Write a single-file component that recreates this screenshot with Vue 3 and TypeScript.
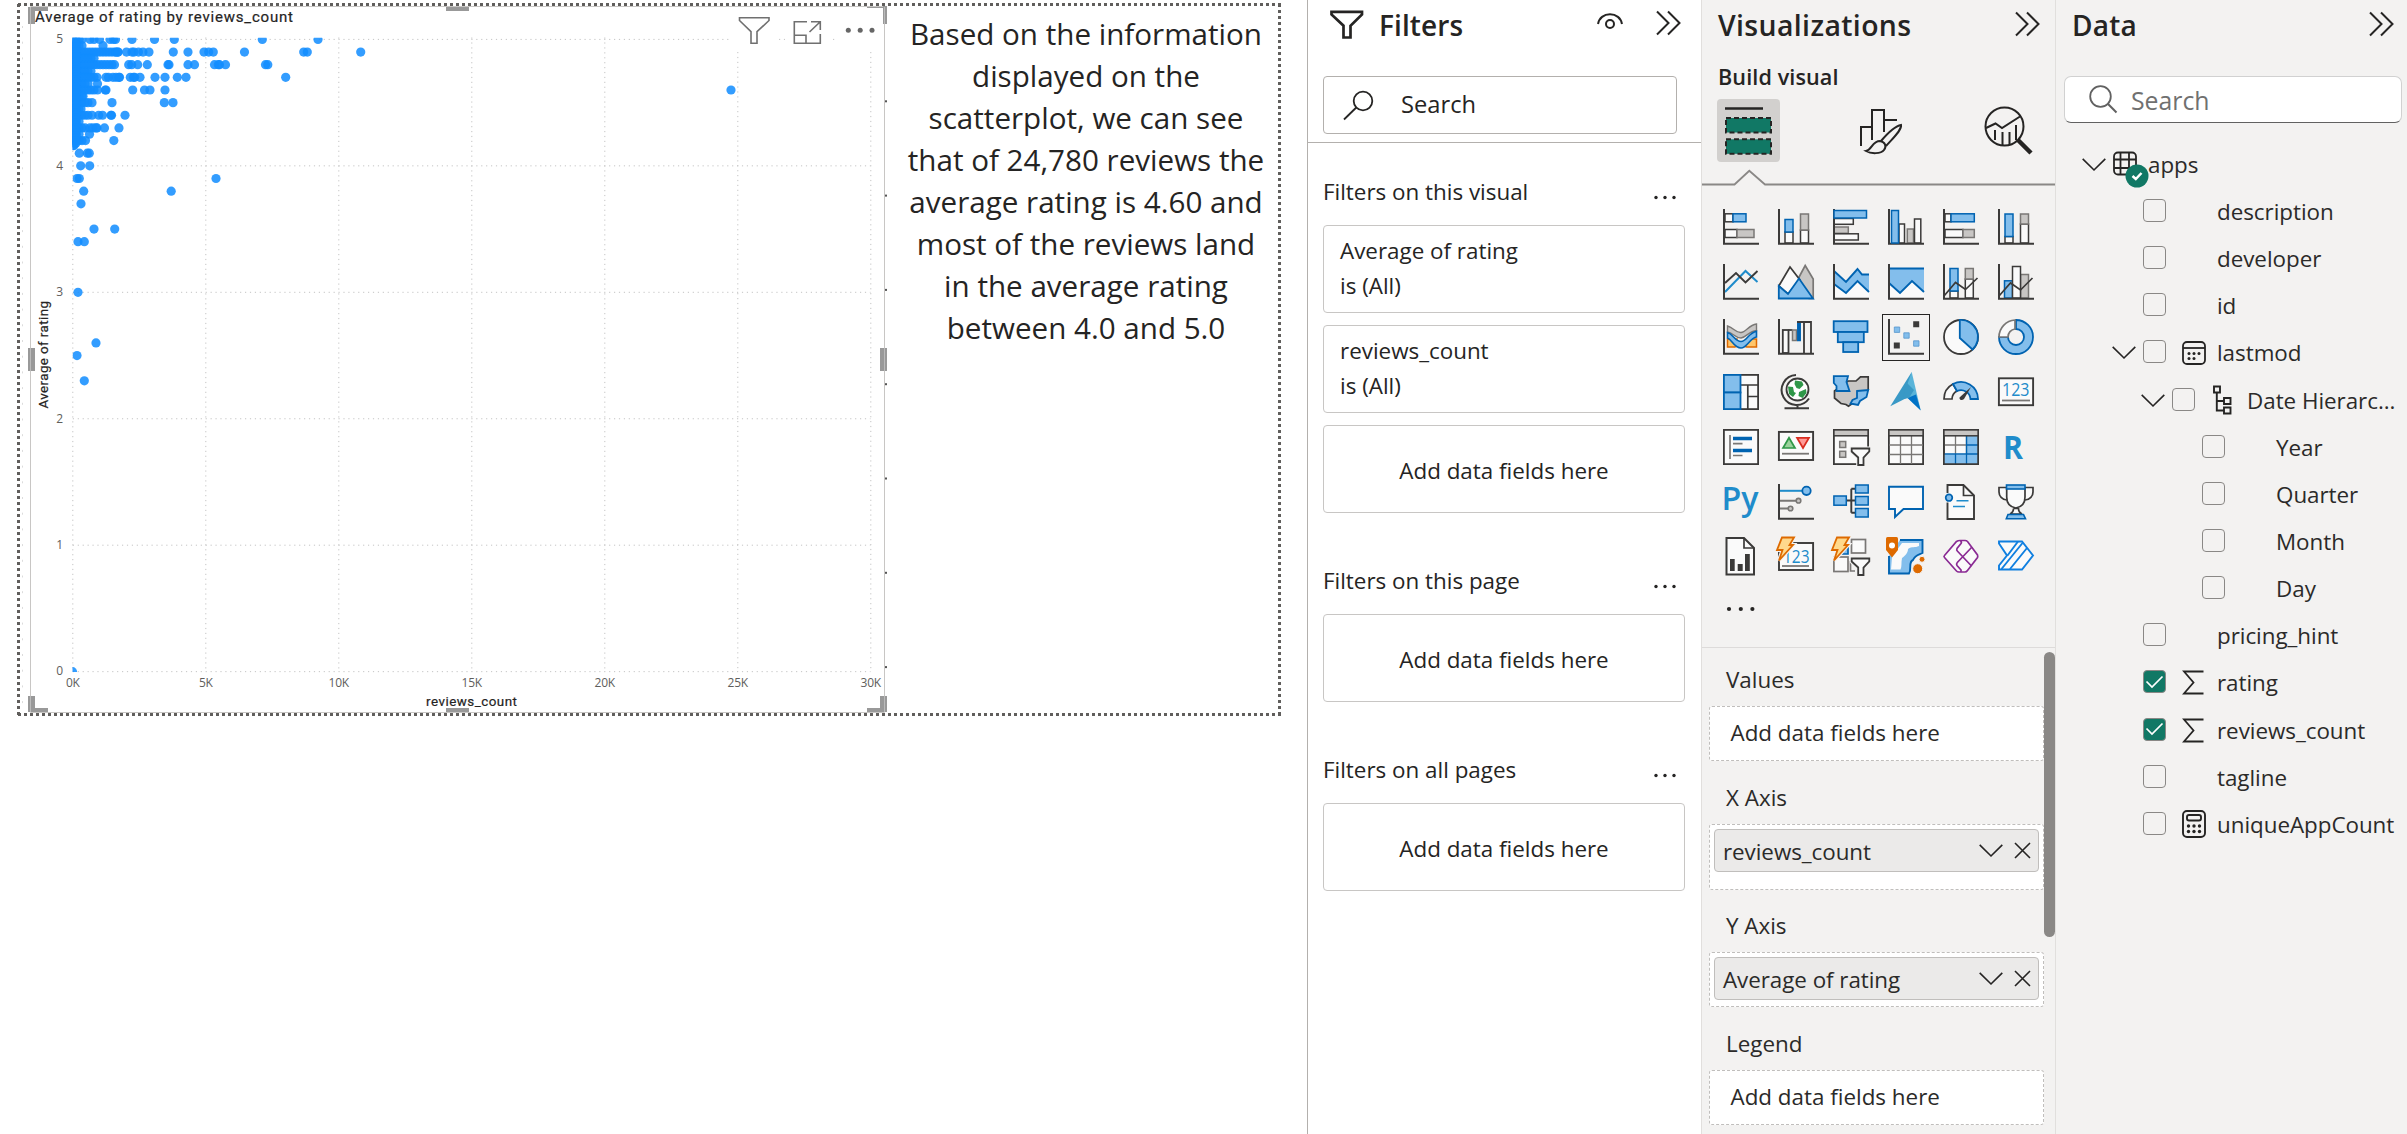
<script setup lang="ts">
type Row = {
  label: string
  level: number
  chevron?: boolean
  box?: boolean
  checked?: boolean
  icon?: 'table' | 'calendar' | 'tree' | 'sigma' | 'calc'
}

/* ---------- scatter chart ---------- */
const X0 = 72.8
const XSTEP = 133
const Y5 = 39.4
const YSTEP = 126.45
const xTicks = [0, 1, 2, 3, 4, 5, 6]
const yTicks = [5, 4, 3, 2, 1, 0]
const xAt = (i: number) => X0 + i * XSTEP
const yAt = (v: number) => Y5 + (5 - v) * YSTEP

// rating -> [end of the dense run, single points...], horizontal px
const series: Record<string, number[]> = {
  '5': [84, 90, 94, 99.5, 110, 113.5, 115.5, 132, 154.5, 174.3, 262.3, 318],
  '4.95': [84, 103],
  '4.9': [119, 116, 118, 126.5, 132, 134, 138.5, 143, 149, 173.3, 188, 204, 208.7, 213.3, 244.5, 303.7, 307.3, 360.7],
  '4.85': [93, 94],
  '4.8': [113, 114.5, 128.7, 131.7, 137.7, 147.3, 168, 169, 188, 194.5, 214.5, 218.3, 219.5, 225.5, 265.5, 267.8],
  '4.75': [90, 91],
  '4.7': [99, 106, 108.5, 113, 116, 119, 119.5, 130.3, 133.5, 134.7, 140, 155, 165, 177.3, 186, 285.7],
  '4.65': [88, 97.5],
  '4.6': [96, 97.5, 105.3, 106, 132.7, 144.5, 150, 165, 731],
  '4.55': [82, 83],
  '4.5': [90, 92, 112, 164.3, 173],
  '4.45': [80, 81],
  '4.4': [86, 88, 92, 98.7, 102.5, 111, 111.5, 125],
  '4.35': [78, 79],
  '4.3': [86, 90, 93, 96, 97, 104.5, 119],
  '4.25': [80, 89.5],
  '4.2': [83, 85.5, 113.8],
  '4.16': [74, 74],
}
const sparse: [number, number][] = [
  [79.3, 4.1], [87.3, 4.1], [89.3, 4.1], [80.7, 4], [89.7, 4], [77, 3.9], [79.3, 3.9], [216, 3.9],
  [83.7, 3.8], [171.2, 3.8], [81, 3.7], [94, 3.5], [114.7, 3.5], [78, 3.4], [84.3, 3.4], [78, 3],
  [96, 2.6], [77, 2.5], [84.3, 2.3], [72.5, 0],
]
const points: [number, number][] = [...sparse]
for (const [rating, xs] of Object.entries(series)) {
  for (let x = 73; x <= xs[0]; x += 3) points.push([x, Number(rating)])
  for (const x of xs.slice(1)) points.push([x, Number(rating)])
}
for (let r = 4.98; r > 4.18; r -= 0.02) points.push([73, r], [76, r])

const note = [
  'Based on the information', 'displayed on the', 'scatterplot, we can see', 'that of 24,780 reviews the',
  'average rating is 4.60 and', 'most of the reviews land', 'in the average rating', 'between 4.0 and 5.0',
]

/* ---------- filters ---------- */
const filterGroups = [
  { title: 'Filters on this visual', cards: ['Average of rating', 'reviews_count'] },
  { title: 'Filters on this page', cards: [] as string[] },
  { title: 'Filters on all pages', cards: [] as string[] },
]

/* ---------- visual gallery ---------- */
const D = '#3b3a39', B = '#0063b1', BF = '#83beec', G = '#797775', GF = '#c8c6c4', W = '#fafafa'
const rc = (x: number, y: number, x2: number, y2: number, f: string, s: string, w = 1.5) =>
  `<rect x="${x}" y="${y}" width="${x2 - x}" height="${y2 - y}" fill="${f}" stroke="${s}" stroke-width="${w}"/>`
const pa = (d: string, f = 'none', s = D, w = 1.7) =>
  `<path d="${d}" fill="${f}" stroke="${s}" stroke-width="${w}"/>`
const ci = (x: number, y: number, r: number, f: string, s: string, w = 1.5) =>
  `<circle cx="${x}" cy="${y}" r="${r}" fill="${f}" stroke="${s}" stroke-width="${w}"/>`
const axis = pa('M1 0V34.7H36', 'none', D, 2)
const funnel = pa('M18.7 19.5H36.3V22.5L30.5 28.5V36H25.2V28.5L18.7 22.5Z', W, '#f3f2f1', 4) +
  pa('M18.7 19.5H36.3V22.5L30.5 28.5V36H25.2V28.5L18.7 22.5Z', W, D, 1.8)
const bolt = pa('M4 -1.5H16L11.5 6H15L1 21.5L4.5 11H-1Z', '#f3f2f1', '#f3f2f1', 4) +
  pa('M4 -1.5H16L11.5 6H15L1 21.5L4.5 11H-1Z', '#ffd98c', '#de6a00', 1.8)
const txt = (t: string, x: number, y: number, s: number, w: number, weight = 400) =>
  `<text x="${x}" y="${y}" font-size="${s}" font-weight="${weight}" fill="#1f8ccb" textLength="${w}" lengthAdjust="spacingAndGlyphs" font-family="Open Sans, sans-serif">${t}</text>`

const visuals: string[] = [
  rc(2, 4.8, 10, 12.8, W, D) + rc(10, 4.8, 23, 12.8, BF, B) + rc(2, 20.5, 14, 28.5, W, D) + rc(14, 20.5, 31, 28.5, GF, G) + axis,
  rc(7, 23, 15, 34, W, D) + rc(7, 10.5, 15, 23, BF, B) + rc(22.5, 21, 30.5, 34, W, D) + rc(22.5, 5, 30.5, 21, GF, G) + axis,
  rc(1, 9.5, 20.3, 15.3, W, D) + rc(1, 18, 15.3, 24.3, GF, G) + rc(1, 24.8, 25.3, 31, W, D) + axis + rc(1, 1.5, 33.5, 9, BF, B),
  rc(11, 15, 16.5, 34, W, D) + rc(19.3, 20, 25.5, 34, GF, G) + rc(26.5, 10, 32.8, 34, W, D) + axis + rc(3.5, 1.5, 10.5, 34, BF, B),
  rc(2, 4.8, 8, 12.8, W, D) + rc(8, 4.8, 31.3, 12.8, BF, B) + rc(2, 20.5, 20, 28.5, W, D) + rc(20, 20.5, 31.3, 28.5, GF, G) + axis,
  rc(7, 27.5, 15, 34, W, D) + rc(7, 5, 15, 27.5, BF, B) + rc(22.5, 15, 30.5, 34, W, D) + rc(22.5, 5, 30.5, 15, GF, G) + axis,

  pa('M2 28L22.5 7L34.5 18', 'none', '#1f8ccb', 2) + pa('M2 19L13 9L22.5 18.5L34.5 7', 'none', D, 1.9) + axis,
  pa('M20 15L27.2 1.5L35.2 15V34.5H31Z', GF, G) + pa('M.8 22L12 3L22 16L10 30Z', W, D) + pa('M.8 22L10 30L21 14.5L35 34.5H.8Z', BF, B, 1.8),
  pa('M1 7L13 18L24.5 5L29 10.5H36V28L24.5 17L13 29L1 20Z', BF, 'none') + pa('M1 20L13 29L24.5 17L36 28V34H1Z', W, 'none') + pa('M1 7L13 18L24.5 5L29 10.5H36M1 20L13 29L24.5 17L36 28', 'none', B, 1.9) + axis,
  pa('M1 4.5H36V28L24 17L12 29L1 19Z', BF, 'none') + pa('M1 19L12 29L24 17L36 28V34H1Z', W, 'none') + pa('M1 4.5H36M1 19L12 29L24 17L36 28', 'none', B, 1.9) + axis,
  rc(7, 27, 15, 34, W, D) + rc(7, 4.5, 15, 27, BF, B) + rc(22.3, 15, 30.3, 34, W, D) + rc(22.3, 4.5, 30.3, 15, GF, G) + axis + pa('M1 32L12.5 18.5L22.5 25.5L34.5 14'),
  rc(6.5, 16.8, 14.5, 34, BF, B) + rc(22.5, 10.5, 30.5, 34, GF, G) + rc(14.5, 2.5, 22.5, 34, W, D) + axis + pa('M1 32L12.5 19L22.5 26L34.5 14'),

  pa('M4.5 20H14V23H24V20H33.5V28H24C21 26.5 14 26.5 12 28H4.5Z', '#ffc66b', '#de6a00', 1.5) + pa('M4.5 7C11 9 13 14 18 13.5C23 13 26 6 33.5 5V11.5C26 12 23 18.5 18 19C12 19 10 13.5 4.5 13Z', GF, G, 1.4) + pa('M4.5 13.5C10 15 12 22.5 18 22.5C24 22.5 25 14 33.5 12.2V18C27 19 24 29 18 29C11 29 9 20.5 4.5 19Z', BF, B, 1.6) + axis,
  rc(4.8, 11, 10.5, 34, W, D, 1.8) + pa('M10.5 11H14.5', 'none', D, 1.8) + rc(14.5, 11, 18.5, 21.5, GF, G) + rc(19.8, 3, 22.2, 21.5, B, B) + pa('M19 3H33V34M26 3V34', 'none', D, 1.8) + axis,
  rc(0.7, 2.2, 34.5, 13, BF, B, 1.8) + rc(4.8, 13, 30.8, 23.2, BF, B, 1.8) + rc(10.2, 23.2, 25.2, 33, BF, B, 1.8),
  axis + `<path fill="#83beec" stroke="#5795cd" stroke-width=".8" d="M6.3 8h5.4v5.4H6.3zM15.8 13.8h5.4v5.4h-5.4zM25.6 21.8H31v5.4h-5.4z"/><path fill="${D}" d="M25.2 2.2h6v6h-6zM5.8 23.5h6v6h-6z"/>`,
  ci(18, 18, 17, W, D, 1.8) + pa('M16.8 1A17 17 0 0 1 29.5 30.5L16.8 19Z', BF, B, 1.8),
  pa('M18 1A17 17 0 1 1 1 18H10A8 8 0 1 0 18 10Z', BF, B, 1.8) + pa('M1 18A17 17 0 0 1 17 1V10A8 8 0 0 0 10 18Z', W, G, 1.7),

  rc(0.9, 0.9, 35.1, 35.1, W, D, 1.8) + pa('M17.5 11H35M24.8 11V35M24.8 22.5H35', 'none', D) + rc(0.9, 0.9, 17.5, 18.5, BF, B, 1.8) + rc(0.9, 18.5, 17.5, 35.1, BF, B, 1.8),
  ci(19.5, 15.5, 11, '#fff', D, 1.8) + '<path fill="#2f9748" d="M17 6.5l7 1 1.5 3.5-4 4-3-1-2-4zM10 12.5l5 .5 1 5 2 1-3 4-4-3zM21 18l7-3 .5 4-4 5-4-2z"/>' + pa('M18 1A15 15 0 1 0 31 24.5M19.5 30.5V34M6.5 34.3H31', 'none', D, 2),
  pa('M15 7H23L27.5 2.8H35.2V16L27 24L15.5 32.3L13 30.5L8 29.5L1.5 24V17Z', GF, D) + pa('M.8 2.2H15L13.5 8L16.5 17H3.5V12L.8 9Z', BF, B, 1.8) + pa('M24 17L35.2 16L33.5 23L27 27L25 31L17.5 29.5L19.5 26L24 24Z', BF, B, 1.8),
  '<path fill="#3999c6" d="M23.7-2L2.3 32.3 19.5 23.5z"/><path fill="#59b4d9" d="M23.7-2L32.7 36.3 19.5 23.5 18 14z"/><path fill="#0072c6" d="M19.5 24l8.5-3.5 4.7 16z"/><path fill="#3999c6" d="M18 8l8 8-5 8-6 1z"/>',
  pa('M1 25A17 17 0 0 1 10 10L14 17A9.5 9.5 0 0 0 9 25Z', W, D) + pa('M10 10A17 17 0 0 1 35 25H27.5A9.5 9.5 0 0 0 14 17Z', BF, B, 1.8) + `<path fill="${D}" d="M28 13L21 25c-2 2-5 1-4.5-1.5z"/>`,
  rc(0.9, 4.3, 35.1, 31.2, W, D, 1.9) + txt('123', 4, 22, 17.5, 27.5) + pa('M4 26.5H32', 'none', G, 1.8),

  rc(0.9, 0.9, 35.1, 35.1, W, D, 1.8) + pa('M7 6V30M10 14.7H19.5M10 26.5H19.5', 'none', G, 1.7) + pa('M10 9.5H29M10 21.5H29', 'none', B, 3.5),
  rc(0.9, 2.9, 35.1, 31, W, D, 1.9) + pa('M5 19L11 8.8L17 19Z', '#9ad29c', '#2f9748') + pa('M19 8.8H31L25 19Z', '#ff9a96', '#d92c20') + pa('M4 24.7H31', 'none', G, 1.8),
  rc(0.9, 0.9, 35.1, 35.1, W, D, 1.8) + rc(0.9, 0.9, 35.1, 6.8, GF, D, 1.5) + rc(6.7, 12.5, 12.7, 18.5, GF, G) + rc(6.7, 22.3, 12.7, 28.3, GF, G) + '<rect x="31" y="22" width="7" height="15" fill="#f3f2f1"/>' + funnel,
  rc(0.9, 0.9, 35.1, 35.1, W, D, 1.8) + pa('M12.5 7V35M23.5 7V35M1 16H35M1 25.5H35', 'none', G, 1.3) + rc(0.9, 0.9, 35.1, 6.8, GF, D, 1.5),
  rc(0.9, 0.9, 35.1, 35.1, W, D, 1.8) + '<path fill="#83beec" d="M23.5 7H35V35H1V25.5H23.5z"/>' + pa('M12.5 7V25M23.5 7V25M1 16H23', 'none', G, 1.3) + pa('M23.5 7V35M12.5 25V35M1 25H35M23.5 16H35', 'none', B, 1.3) + rc(0.9, 0.9, 35.1, 6.8, GF, D, 1.5) + pa('M.9 6V35.1H35.1V6', 'none', D),
  txt('R', 5, 30, 33, 20, 700),

  txt('Py', -1.5, 25.5, 32, 37, 600),
  axis + pa('M2 6.8H24', 'none', '#1f8ccb', 2) + pa('M2 16.7H18M2 24.5H10', 'none', G, 2) + ci(28.5, 6.8, 4.2, BF, B, 1.8) + ci(20.5, 16.7, 2.3, GF, G, 1.6) + ci(12.5, 24.5, 2.3, GF, G, 1.6),
  pa('M13 16.5H23M18.3 4.8V28.7M18.3 4.8H23M18.3 28.7H23', 'none', D, 1.9) + rc(0.9, 12, 13.3, 21.2, BF, B) + rc(22.5, 1, 35.2, 9, BF, B) + rc(22.5, 12.5, 35.2, 21, BF, B) + rc(22.5, 24.5, 35.2, 33, BF, B),
  pa('M1 2.8H35V25H15.5L7 33V25H1Z', W, B, 1.9),
  pa('M4.5 9V1H20.5L31 11.5V35H4.5V18.5', W, D, 1.9) + pa('M20.5 1V11.5H31', 'none', D) + pa('M13.5 16.7H25.5M10 22.5H22', 'none', '#1f8ccb', 1.6) + ci(6, 13.7, 3.3, BF, B, 1.7),
  pa('M8.5 3.5H1V8C1 12 4 15.5 9 16M27 3.5H35V8C35 12 32 15.5 27 16', W, D) + pa('M8.7 4V13C8.7 20 12 23 17.8 24C24 23 27 20 27 13V4Z', W, D) + pa('M15.5 24.5H20.5C20.5 28 22 29 24 30H12C14 29 15.5 28 15.5 24.5', W, D) + rc(8.5, 1, 27, 5, BF, B, 1.6) + pa('M10 30.5H25.5L27.5 34.8H8.3Z', BF, B, 1.6),

  pa('M3.5 -1H21L31 9V35.5H3.5Z', W, D, 2) + pa('M21 -1V9H31', 'none', D) + `<path fill="${D}" d="M7 20h4.7v12H7zM14.7 25h5v7h-5zM22 15h4.8v17H22z"/>`,
  rc(1, 4, 35.1, 31, W, D, 1.9) + txt('123', 5, 23.5, 17.5, 26.5) + pa('M4 27H31', 'none', G, 1.8) + bolt,
  rc(0.9, 18, 15, 32.5, W, G, 1.7) + rc(18.5, 0.5, 32.5, 14, W, G, 1.7) + pa('M6 15H15V8Z', BF, B) + pa('M17.5 22V32H22', 'none', G) + bolt + funnel,
  pa('M12 1H34.5V14C30 16 27 16 25 21C20 23 24 30 21 34.5H1V17', BF, B, 1.9) + pa('M4 18L3 30.5H12.5C14 28 13 24 14 19C17 17 20 14 20 10C24 7 27 9 31 7V4H14', W, 'none') + ci(29.7, 29.7, 5, '#de6a00', '#f3f2f1', 1) + ci(34, 20.3, 3, '#de6a00', '#f3f2f1', 1) + '<path fill="#de6a00" d="M-2-.5q0-1.5 1.5-1.5H8.5q1.5 0 1.5 1.5V11L4 18.5-2 11z"/>' + ci(4, 6.5, 3, '#fff', 'none', 0),
  pa('M1.5 18.5Q.5 17.5 1.5 16.5L13.5 2.5Q15 1.5 17 1.5H22Q23.5 1.5 24.5 2.5L34.5 16Q35 17.5 34.5 18.5L24.5 31.5Q23.5 33 22 33H16Q14.5 33 13.5 32Z', W, '#8a2a94') + pa('M17.5 1.8Q19 3 18 4.5L14 9.5Q13.3 11 14.3 12L28.5 27M29 8L14.3 23.5Q13 25 14 26.5L18 31Q18.5 32 17.5 33', 'none', '#8a2a94'),
  pa('M1 2.5H24L35 16.5L24 30.5H1V26.5L9 16.5L1 4.5Z', W, '#0f7fe0', 1.9) + pa('M9.5 16.5L20 2.5M24.5 4L3.5 30M29 9L12 30', 'none', '#0f7fe0', 1.9),
]

/* ---------- field wells ---------- */
const wells = [
  { title: 'Values', field: '', cls: '' },
  { title: 'X Axis', field: 'reviews_count', cls: 'tall' },
  { title: 'Y Axis', field: 'Average of rating', cls: '' },
  { title: 'Legend', field: '', cls: '' },
]

/* ---------- data tree ---------- */
const rows: Row[] = [
  { label: 'apps', level: 0, chevron: true, icon: 'table' },
  { label: 'description', level: 1, box: true },
  { label: 'developer', level: 1, box: true },
  { label: 'id', level: 1, box: true },
  { label: 'lastmod', level: 1, chevron: true, box: true, icon: 'calendar' },
  { label: 'Date Hierarc...', level: 2, chevron: true, box: true, icon: 'tree' },
  { label: 'Year', level: 3, box: true },
  { label: 'Quarter', level: 3, box: true },
  { label: 'Month', level: 3, box: true },
  { label: 'Day', level: 3, box: true },
  { label: 'pricing_hint', level: 1, box: true },
  { label: 'rating', level: 1, box: true, checked: true, icon: 'sigma' },
  { label: 'reviews_count', level: 1, box: true, checked: true, icon: 'sigma' },
  { label: 'tagline', level: 1, box: true },
  { label: 'uniqueAppCount', level: 1, box: true, icon: 'calc' },
]
</script>

<template>
  <div class="app">
    <main class="canvas">
      <div class="page">
        <svg class="chart" width="870" height="716" viewBox="17 3 870 716">
          <defs>
            <clipPath id="plot"><rect x="72.5" y="37.7" width="800" height="634.3" /></clipPath>
          </defs>
          <line x1="22.5" x2="22.5" y1="26" y2="706" class="ruler" />
          <path d="M30.5 6.5H884.5V712.5H30.5Z" class="outline" />
          <g class="handles">
            <path d="M28 7H48V11H35V24H28ZM446 7H469V11H446ZM867 7H883V6H887V24H883V8H867ZM28 348H35V371H28ZM880 348H887V371H880ZM28 696H35V708H48V712H28ZM446 708H469V712H446ZM867 708H880V696H887V712H867Z" />
            <path d="M30.5 7V24M30.5 348V371M30.5 696V712M884.5 7V24M884.5 348V371M884.5 696V712" class="shine" />
          </g>
          <g class="ticks">
            <rect v-for="i in 7" :key="i" x="885" :y="100.3 + (i - 1) * 94.3" width="2" height="2" />
          </g>
          <g class="grid">
            <line v-for="i in xTicks" :key="'x' + i" :x1="xAt(i)" :x2="xAt(i)" :y1="i > 4 ? 52 : 37.5" y2="672" />
            <line v-for="v in yTicks" :key="'y' + v" :x1="X0" :x2="v === 5 ? 732 : 870.5" :y1="yAt(v)" :y2="yAt(v)" />
            <path d="M779 39.4H785M833 39.4H835" />
          </g>
          <g class="dots" clip-path="url(#plot)">
            <circle v-for="(p, i) in points" :key="i" :cx="p[0]" :cy="yAt(p[1])" r="4.6" />
          </g>
          <g class="ticklabels">
            <text v-for="v in yTicks" :key="v" x="62.8" :y="yAt(v) + 3.8" text-anchor="end">{{ v }}</text>
            <text v-for="i in xTicks" :key="i" :x="xAt(i)" y="686.5" text-anchor="middle">{{ i * 5 }}K</text>
          </g>
          <text class="title" x="35" y="22.3" textLength="258">Average of rating by reviews_count</text>
          <text class="axis" x="426" y="706" textLength="91">reviews_count</text>
          <text class="axis" transform="translate(48.3 408.5) rotate(-90)" textLength="107.5">Average of rating</text>
          <g class="tools">
            <path d="M739.5 17.8H769V20.5L757 31.7V43.2H751V31.7L739.5 20.5Z" />
            <path d="M807 21.8H794.3V43.2H820.3V34M794.3 35.3H806V43.2M811 21.8H820.3V30M820 22L809.5 32" />
            <g class="solid"><circle cx="848.3" cy="30.3" r="2.5" /><circle cx="860.2" cy="30.3" r="2.5" /><circle cx="872" cy="30.3" r="2.5" /></g>
          </g>
        </svg>
        <div class="note"><div v-for="l in note" :key="l">{{ l }}</div></div>
      </div>
    </main>

    <section class="filters">
      <header class="head fhead">
        <svg class="fun" width="34" height="30" viewBox="0 0 34 30"><path d="M1.5 1.8H32V4.5L20.5 15.7V27.5H13.5V15.7L1.5 4.5Z" fill="none" stroke="#252423" stroke-width="2.7" /></svg>
        <h2>Filters</h2>
        <svg class="eye" width="26" height="17" viewBox="0 0 26 17"><path d="M1 11C2 5 7 1.3 13 1.3S24 5 25 11" fill="none" stroke="#252423" stroke-width="2" /><circle cx="13" cy="11" r="4" fill="none" stroke="#252423" stroke-width="2" /></svg>
        <svg class="dbl" width="26" height="26" viewBox="0 0 26 26"><path d="M1 1.5L12.5 13L1 24.5M12 1.5L23.5 13L12 24.5" /></svg>
      </header>
      <div class="search fsearch">
        <svg width="31" height="31" viewBox="0 0 31 31"><circle cx="20" cy="11" r="9.3" fill="none" stroke="#252423" stroke-width="1.8" /><path d="M13.3 17.5L1 29.5" stroke="#252423" stroke-width="1.8" /></svg>
        <span>Search</span>
      </div>
      <div class="groups">
        <div v-for="g in filterGroups" :key="g.title" class="group">
          <div class="gtitle"><span>{{ g.title }}</span><svg width="24" height="5" viewBox="0 0 24 5"><circle cx="3" cy="2.5" r="1.7" /><circle cx="12" cy="2.5" r="1.7" /><circle cx="21" cy="2.5" r="1.7" /></svg></div>
          <div v-for="c in g.cards" :key="c" class="card"><div>{{ c }}</div><div>is (All)</div></div>
          <div class="card drop">Add data fields here</div>
        </div>
      </div>
    </section>

    <section class="viz">
      <header class="head vhead">
        <h2>Visualizations</h2>
        <svg class="dbl" width="26" height="26" viewBox="0 0 26 26"><path d="M1 1.5L12.5 13L1 24.5M12 1.5L23.5 13L12 24.5" /></svg>
      </header>
      <h3>Build visual</h3>
      <div class="tabs">
        <div class="tab on">
          <svg width="48" height="48" viewBox="0 0 48 48"><path d="M0 1.5H38" stroke="#252423" stroke-width="2.4" /><g fill="#117865" stroke="#252423" stroke-width="2" stroke-dasharray="5 3"><rect x="1" y="11" width="45" height="14.5" /><rect x="1" y="32.3" width="45" height="14.5" /></g><path d="M3 12.5H44V24H3ZM3 33.8H44V45.3H3Z" fill="#117865" /></svg>
        </div>
        <svg class="tab2" width="44" height="46" viewBox="0 0 44 46" fill="none" stroke="#252423" stroke-width="2"><path d="M2 38V19H13M13 32V2H25V24M25 12H38" /><path d="M22 33C28 26 36 18 42 17C43 22 34 30 27 38" fill="#f3f2f1" /><path d="M7 43C13 42 13 33 21 33C26 34 28 38 25 42C22 46 12 46 7 43Z" fill="#f3f2f1" /></svg>
        <svg class="tab3" width="48" height="48" viewBox="0 0 48 48" fill="none" stroke="#252423" stroke-width="2"><circle cx="20.5" cy="20.5" r="19" /><path d="M2 22L11.5 17.5L18 22L36 10.5M11 24V34M18.5 26V39M25.5 26V39M32 19V34" /><path d="M34 34L47 47" stroke-width="4.5" /></svg>
      </div>
      <svg class="notch" width="353" height="16" viewBox="0 0 353 16"><path d="M0 14.5H32.5L47.3 .8L63 14.5H353" fill="none" stroke="#8a8886" stroke-width="1.8" /></svg>
      <div class="gallery">
        <div v-for="(v, i) in visuals" :key="i" class="cell" :class="{ sel: i === 15 }">
          <svg width="36" height="36" viewBox="0 0 36 36" v-html="v"></svg>
        </div>
      </div>
      <svg class="more" width="30" height="6" viewBox="0 0 30 6"><circle cx="3" cy="3" r="2.1" /><circle cx="14.8" cy="3" r="2.1" /><circle cx="26.4" cy="3" r="2.1" /></svg>
      <div class="wells">
        <div class="welllist">
          <template v-for="w in wells" :key="w.title">
            <label>{{ w.title }}</label>
            <div class="well" :class="w.cls">
              <div v-if="w.field" class="chip">
                <span>{{ w.field }}</span>
                <svg width="24" height="13" viewBox="0 0 24 13"><path d="M.7 .9L12 12L23.3 .9" /></svg>
                <svg class="x" width="17" height="17" viewBox="0 0 17 17"><path d="M1 1L16 16M16 1L1 16" /></svg>
              </div>
              <span v-else class="empty">Add data fields here</span>
            </div>
          </template>
        </div>
        <div class="scroll"></div>
      </div>
    </section>

    <section class="data">
      <header class="head dhead">
        <h2>Data</h2>
        <svg class="dbl" width="26" height="26" viewBox="0 0 26 26"><path d="M1 1.5L12.5 13L1 24.5M12 1.5L23.5 13L12 24.5" /></svg>
      </header>
      <div class="search dsearch">
        <svg width="29" height="29" viewBox="0 0 29 29"><circle cx="11.5" cy="11.5" r="10.3" fill="none" stroke="#616161" stroke-width="1.8" /><path d="M18.8 18.8L27.5 27.5" stroke="#616161" stroke-width="2" /></svg>
        <span>Search</span>
      </div>
      <div class="tree">
        <div v-for="r in rows" :key="r.label" class="row" :class="'l' + r.level">
          <span class="chev"><svg v-if="r.chevron" width="24" height="13" viewBox="0 0 24 13"><path d="M.7 .9L12 12L23.3 .9" /></svg></span>
          <span v-if="r.box" class="box" :class="{ checked: r.checked }"><svg v-if="r.checked" width="19" height="14" viewBox="0 0 19 14"><path d="M1.5 6.5L7 12L17.5 1.5" fill="none" stroke="#fff" stroke-width="1.7" /></svg></span>
          <span class="ico">
            <svg v-if="r.icon === 'table'" width="37" height="37" viewBox="0 0 37 37"><g fill="none" stroke="#252423" stroke-width="1.8"><rect x="1" y="1.5" width="22" height="22" rx="4" /><path d="M7.5 1.5V23.5M16 1.5V23.5M1 8.5H23M1 17H23" /></g><circle cx="24" cy="25" r="11.5" fill="#117865" /><path d="M19.5 25L22.8 28L28.5 22" fill="none" stroke="#fff" stroke-width="2.5" /></svg>
            <svg v-if="r.icon === 'calendar'" width="24" height="24" viewBox="0 0 24 24"><g fill="none" stroke="#252423" stroke-width="1.8"><rect x="1" y="1" width="22" height="22" rx="4" /><path d="M1 7H23" /></g><g fill="#252423"><circle v-for="p in [[7,12.5],[12,12.5],[17,12.5],[7,17.5],[12,17.5]]" :key="p.join()" :cx="p[0]" :cy="p[1]" r="1.5" /></g></svg>
            <svg v-if="r.icon === 'tree'" width="19" height="30" viewBox="0 0 19 30" fill="none" stroke="#252423" stroke-width="1.9"><path d="M1 1.5H7V7.5H1ZM11 13H17.5V19H11ZM11 22.5H17.5V28.5H11ZM3.8 7.5V25.5H11M3.8 16H11" /></svg>
            <svg v-if="r.icon === 'sigma'" width="23" height="25" viewBox="0 0 23 25"><path d="M21.5 1.5H2L11.5 12.5L2 23.5H21.5" fill="none" stroke="#252423" stroke-width="1.8" /></svg>
            <svg v-if="r.icon === 'calc'" width="24" height="28" viewBox="0 0 24 28"><g fill="none" stroke="#252423" stroke-width="1.9"><rect x="1" y="1" width="22" height="26" rx="4" /><rect x="5" y="5" width="14" height="5.5" rx="2" /></g><g fill="#252423"><circle v-for="p in [[6.5,16],[12,16],[17.5,16],[6.5,21.5],[12,21.5],[17.5,21.5]]" :key="p.join()" :cx="p[0]" :cy="p[1]" r="1.7" /></g></svg>
          </span>
          <span class="lbl">{{ r.label }}</span>
        </div>
      </div>
    </section>
  </div>
</template>

<style>
html, body { margin: 0; background: #fff; overflow: hidden; }
</style>

<style scoped>
* { box-sizing: border-box; }
.app { display: flex; width: 2407px; height: 1134px; overflow: hidden; background: #fff; color: #252423; font-family: "Open Sans", "Noto Sans", sans-serif; font-size: 22.4px; line-height: 35px; white-space: nowrap; }
svg { display: block; flex: none; overflow: visible; }
h2, h3 { margin: 0; font-weight: 600; }

.canvas { width: 1307px; padding: 3px 0 0 17px; }
.page { display: flex; width: 1264px; height: 713px;
  background:
    repeating-linear-gradient(90deg, #605e5c 0 3px, transparent 3px 6px) 1px 0 / 100% 3px no-repeat,
    repeating-linear-gradient(90deg, #605e5c 0 3px, transparent 3px 6px) 1px 100% / 100% 3px no-repeat,
    repeating-linear-gradient(180deg, #605e5c 0 3px, transparent 3px 6px) 0 1px / 3px 100% no-repeat,
    repeating-linear-gradient(180deg, #605e5c 0 3px, transparent 3px 6px) 100% 1px / 3px 100% no-repeat; }
.ruler { stroke: #dcdcdc; stroke-dasharray: 2 13.7; }
.outline { fill: none; stroke: #c8c6c4; }
.handles { fill: #999; }
.shine { stroke: #bbb; }
.ticks { fill: #555; }
.grid { fill: none; stroke: #c4c4c4; stroke-width: 1; stroke-dasharray: 1.2 3.72; }
.dots { fill: #118dff; fill-opacity: .86; }
.ticklabels { font-size: 12px; letter-spacing: -.2px; fill: #605e5c; }
.title, .axis { font-family: Roboto, sans-serif; fill: #252423; font-weight: 400; font-size: 15px; stroke: #252423; stroke-width: .2px; }
.axis { font-size: 13.4px; }
.tools { fill: none; stroke: #707070; stroke-width: 1.6; }
.tools .solid { fill: #666; stroke: none; }
.note { width: 398px; padding-top: 10px; text-align: center; font-size: 29.6px; line-height: 42px; flex: none; }

.head { display: flex; align-items: flex-start; }
.head h2 { font-size: 28px; line-height: 40px; padding-top: 5px; }
.dbl { fill: none; stroke: #252423; stroke-width: 2; }

.filters { width: 394px; border-left: 1px solid #b3b0ad; }
.fhead { height: 76px; padding-left: 22px; }
.fun { margin-top: 10px; }
.fhead h2 { margin-left: 15px; width: 220px; letter-spacing: .1px; }
.eye { margin-top: 13px; margin-left: -2px; }
.fhead .dbl { margin: 10px 0 0 33px; }
.search { display: flex; background: #fff; }
.fsearch { width: 354px; height: 58px; margin-left: 15px; border: 1px solid #b3b0ad; border-radius: 4px; font-size: 23.7px; line-height: 54px; padding-left: 20px; }
.fsearch svg { margin-top: 13px; margin-left: -1px; }
.fsearch span { margin-left: 27px; }
.groups { margin-top: 8px; border-top: 1px solid #b3b0ad; padding: 31px 0 0 15px; }
.group { margin-bottom: 50px; }
.gtitle { display: flex; justify-content: space-between; width: 354px; height: 51px; line-height: 35px; }
.gtitle svg { margin-top: 21px; fill: #252423; }
.card { width: 362px; height: 88px; border: 1px solid #c8c6c4; border-radius: 4px; margin-bottom: 12px; padding: 7px 0 0 16px; }
.card.drop { margin-bottom: 0; padding: 0; text-align: center; line-height: 89px; }

.viz { width: 354px; background: #f3f2f1; border-left: 1px solid #e1dfdd; display: flex; flex-direction: column; }
.viz > * { flex: none; }
.vhead { height: 60px; padding-left: 16px; justify-content: space-between; padding-right: 14px; }
.vhead h2 { font-size: 28.4px; letter-spacing: .38px; }
.vhead .dbl, .dhead .dbl { margin-top: 11px; }
h3 { font-size: 21.6px; line-height: 34px; padding-left: 16px; height: 39px; letter-spacing: .1px; }
.tabs { display: flex; height: 71px; padding-left: 15px; }
.tab { width: 63px; height: 63px; border-radius: 4px; background: #d2d0ce; padding: 8px; }
.tab2 { margin: 9px 0 0 79px; }
.tab3 { margin: 7px 0 0 81px; }
.gallery { display: grid; grid-template-columns: repeat(6, 55px); grid-auto-rows: 55px; padding: 14px 0 0 11px; height: 405px; }
.cell { padding: 9px 10px; }
.cell.sel { border: 1px solid #252423; width: 48px; height: 47px; margin: 4px 0 0 4px; padding: 4px 5px; }
.more { margin: 14.5px 0 0 24px; fill: #252423; }
.wells { height: 487px; margin-top: 35.5px; border-top: 1px solid #dddbda; display: flex; color: #2b2a29; }
.welllist { width: 342px; padding: 13px 0 0 7px; }
.welllist label { display: block; height: 45px; padding: 1px 0 0 17px; }
.well { width: 335px; height: 55px; background: #fff; border: 1px dashed #c0bebc; border-radius: 3px; padding: 4px; margin-bottom: 18px; }
.well.tall { height: 66px; margin-bottom: 17px; }
.empty { display: block; padding: 3.5px 0 0 16.5px; line-height: 35px; }
.chip { width: 325px; height: 43px; display: flex; align-items: center; background: #ebeae9; border: 1px solid #c0bebc; border-radius: 4px; padding-left: 8px; }
.chip span { width: 256px; padding-top: 1px; letter-spacing: -.05px; }
.chip svg, .chev svg { fill: none; stroke: #252423; stroke-width: 1.6; }
.chip .x { margin-left: 11px; }
.scroll { width: 11px; height: 285px; margin-top: 4px; border-radius: 6px; background: #8a8886; }

.data { width: 352px; background: #f3f2f1; border-left: 1px solid #e1dfdd; }
.dhead { height: 76px; padding: 0 12px 0 16px; justify-content: space-between; }
.dhead h2 { letter-spacing: .2px; }
.dsearch { width: 338px; height: 47px; margin-left: 8px; border: 1px solid #d1d1d1; border-bottom-color: #616161; border-radius: 7px; padding-left: 24px; font-size: 24.8px; line-height: 46px; color: #707070; }
.dsearch svg { margin-top: 8px; }
.dsearch span { margin-left: 13px; }
.tree { padding-top: 17.7px; color: #2b2a29; }
.row { display: flex; align-items: center; height: 47.17px; }
.chev { width: 31px; flex: none; }
.box { width: 23px; height: 23px; flex: none; border: 1px solid #8a8886; border-radius: 4px; margin-top: -2px; display: flex; align-items: center; justify-content: center; }
.checked { background: #117865; }
.ico { width: 35px; margin-left: 16px; flex: none; }
.lbl { letter-spacing: -.03px; }
.l0 { padding-left: 26px; }
.l0 .ico { margin-left: 0; width: 35px; height: 25px; margin-top: -2px; }
.l1 { padding-left: 56px; }
.l2 { padding-left: 85px; }
.l2 .ico { margin-left: 18px; width: 34px; }
.l3 { padding-left: 115px; }
</style>
